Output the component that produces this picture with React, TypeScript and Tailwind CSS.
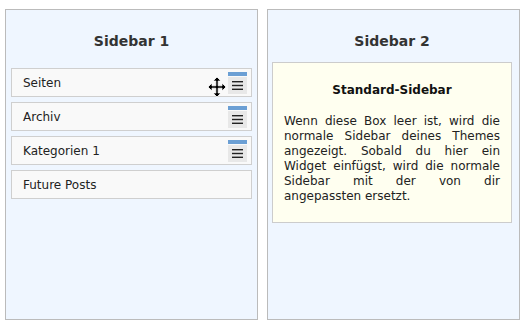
import React from 'react';

const font = { fontFamily: '"DejaVu Sans", Verdana, sans-serif' };

function Handle() {
  return (
    <div className="flex flex-col items-end">
      <div className="h-[4px] w-[19px] bg-[#6b9fd4]" />
      <div className="mt-[1px] flex h-[17px] w-[19px] items-center justify-center bg-[#e8e8e8]">
        <svg width="11" height="9" viewBox="0 0 11 9">
          <rect x="0" y="0" width="11" height="1.4" fill="#222" />
          <rect x="0" y="3.8" width="11" height="1.4" fill="#222" />
          <rect x="0" y="7.6" width="11" height="1.4" fill="#222" />
        </svg>
      </div>
    </div>
  );
}

function MoveCursor() {
  return (
    <svg width="20" height="22" viewBox="0 0 20 22" className="absolute left-[195px] top-[7px]">
      <path
        d="M10 1 L14 5 L11.2 5 L11.2 9.8 L15 9.8 L15 7 L19 11 L15 15 L15 12.2 L11.2 12.2 L11.2 17 L14 17 L10 21 L6 17 L8.8 17 L8.8 12.2 L5 12.2 L5 15 L1 11 L5 7 L5 9.8 L8.8 9.8 L8.8 5 L6 5 Z"
        fill="#000"
        stroke="#fff"
        strokeWidth="0.8"
      />
    </svg>
  );
}

function Widget({ title, handle, cursor }: { title: string; handle?: boolean; cursor?: boolean }) {
  return (
    <div className="relative flex h-[29px] items-start justify-between border border-[#cfcfcf] bg-[#f9f9f9] pl-[11px] pr-[4px]">
      <span className="mt-[6px] text-[12px] leading-[16px] text-[#222]">{title}</span>
      {handle && (
        <div className="mt-[3px]">
          <Handle />
        </div>
      )}
      {cursor && <MoveCursor />}
    </div>
  );
}

export default function App() {
  return (
    <div className="flex gap-[9px] bg-white pl-[5px] pt-[9px]" style={font}>
      {/* Sidebar 1 */}
      <section className="flex h-[311px] w-[253px] flex-col border border-[#bbbbbb] bg-[#eff6ff] px-[5px]">
        <h2 className="mb-[17px] mt-[22px] text-center text-[14px] font-bold leading-[19px] text-[#333]">Sidebar 1</h2>
        <div className="flex flex-col gap-[5px]">
          <Widget title="Seiten" handle cursor />
          <Widget title="Archiv" handle />
          <Widget title="Kategorien 1" handle />
          <Widget title="Future Posts" />
        </div>
      </section>

      {/* Sidebar 2 */}
      <section className="flex h-[311px] w-[253px] flex-col border border-[#bbbbbb] bg-[#eff6ff] pl-[4px] pr-[7px]">
        <h2 className="mb-[11px] mt-[22px] text-center text-[14px] font-bold leading-[19px] text-[#333]">Sidebar 2</h2>
        <div className="h-[161px] border border-[#cccccc] bg-[#fffff0] px-[11px]">
          <h3 className="mt-[19px] text-center text-[12px] font-bold leading-[16px] text-[#111]">Standard-Sidebar</h3>
          <p className="mt-[16px] text-justify text-[12px] leading-[15px] text-[#222]">
            Wenn diese Box leer ist, wird die normale Sidebar deines Themes angezeigt. Sobald du hier ein Widget einfügst, wird die normale Sidebar mit der von dir angepassten ersetzt.
          </p>
        </div>
      </section>
    </div>
  );
}
